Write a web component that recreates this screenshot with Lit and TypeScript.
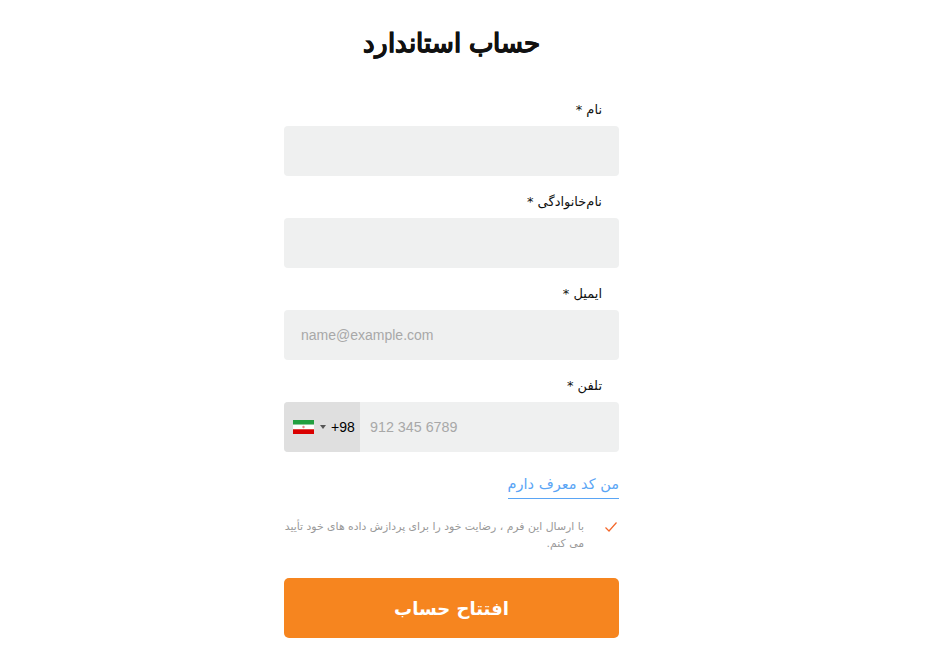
import { LitElement, html, css } from "lit";
import { customElement } from "lit/decorators.js";

@customElement("app-root")
export class AppRoot extends LitElement {
  static styles = css`
    :host { display: block; font-family: "Liberation Sans", Arial, sans-serif; background: #fff; color: #1a1a1a; padding-right: 29px; }
    .wrap { width: 335px; margin: 0 auto; direction: rtl; display: flex; flex-direction: column; }
    h1 { margin: 0; padding-top: 25px; height: 100px; box-sizing: border-box; text-align: center; font-size: 26.4px; line-height: 36px; font-weight: 700; color: #111; -webkit-text-stroke: 0.4px #111; }
    .field { display: flex; flex-direction: column; margin-bottom: 16px; }
    label { font-family: "DejaVu Sans", sans-serif; font-size: 13px; line-height: 20px; height: 20px; margin: 0 17px 6px 0; color: #111; }
    .input { height: 50px; background: #eff0f0; border-radius: 4px; display: flex; align-items: center; font-size: 14px; color: #a8a8a8; direction: ltr; box-sizing: border-box; overflow: hidden; }
    .email { padding-left: 17px; }
    .cc { width: 76px; height: 100%; background: #dfdfdf; display: flex; align-items: center; box-sizing: border-box; padding-left: 9px; color: #000; }
    .flag { display: block; flex: none; }
    .caret { width: 0; height: 0; margin: 0 5px 0 6px; border: 3px solid transparent; border-top: 4px solid #555; border-bottom: 0; }
    .tel { padding-left: 10px; font-size: 14.3px; }
    .ref { align-self: flex-start; margin-top: 4px; font-family: "DejaVu Sans", sans-serif; font-size: 14.5px; line-height: 24px; color: #5aa5f5; border-bottom: 1px solid #5aa5f5; padding-bottom: 2px; }
    .agree { display: flex; gap: 20px; margin-top: 19px; padding-right: 1px; font-family: "DejaVu Sans", sans-serif; font-size: 10.85px; line-height: 17px; color: #999; }
    .agree svg { flex: none; margin-top: 2px; }
    .btn { margin-top: 26px; height: 60px; border-radius: 5px; background: #f6851f; color: #fff; border: 0; font-family: "DejaVu Sans", sans-serif; font-weight: 700; font-size: 18px; }
  `;
  render() {
    return html`<div class="wrap">
      <h1>حساب استاندارد</h1>
      <div class="field"><label>نام *</label><div class="input"></div></div>
      <div class="field"><label>نام‌خانوادگی *</label><div class="input"></div></div>
      <div class="field"><label>ایمیل *</label><div class="input email">name@example.com</div></div>
      <div class="field"><label>تلفن *</label><div class="input">
        <div class="cc">
          <svg class="flag" width="21" height="14" viewBox="0 0 21 14"><rect width="21" height="4.7" fill="#239f40"/><rect y="4.7" width="21" height="4.6" fill="#fff"/><rect y="9.3" width="21" height="4.7" fill="#da0000"/><circle cx="10.5" cy="7" r="1.2" fill="#e58a8a"/></svg>
          <span class="caret"></span><span>+98</span>
        </div>
        <span class="tel">912 345 6789</span>
      </div></div>
      <a class="ref">من کد معرف دارم</a>
      <div class="agree">
        <svg width="14" height="14" viewBox="0 0 14 14" fill="none" stroke="#f4672a" stroke-width="1.2"><path d="M1.5 7.5 5 11l7.5-8.5"/></svg>
        <span>با ارسال این فرم ، رضایت خود را برای پردازش داده های خود تأیید می کنم.</span>
      </div>
      <button class="btn">افتتاح حساب</button>
    </div>`;
  }
}
